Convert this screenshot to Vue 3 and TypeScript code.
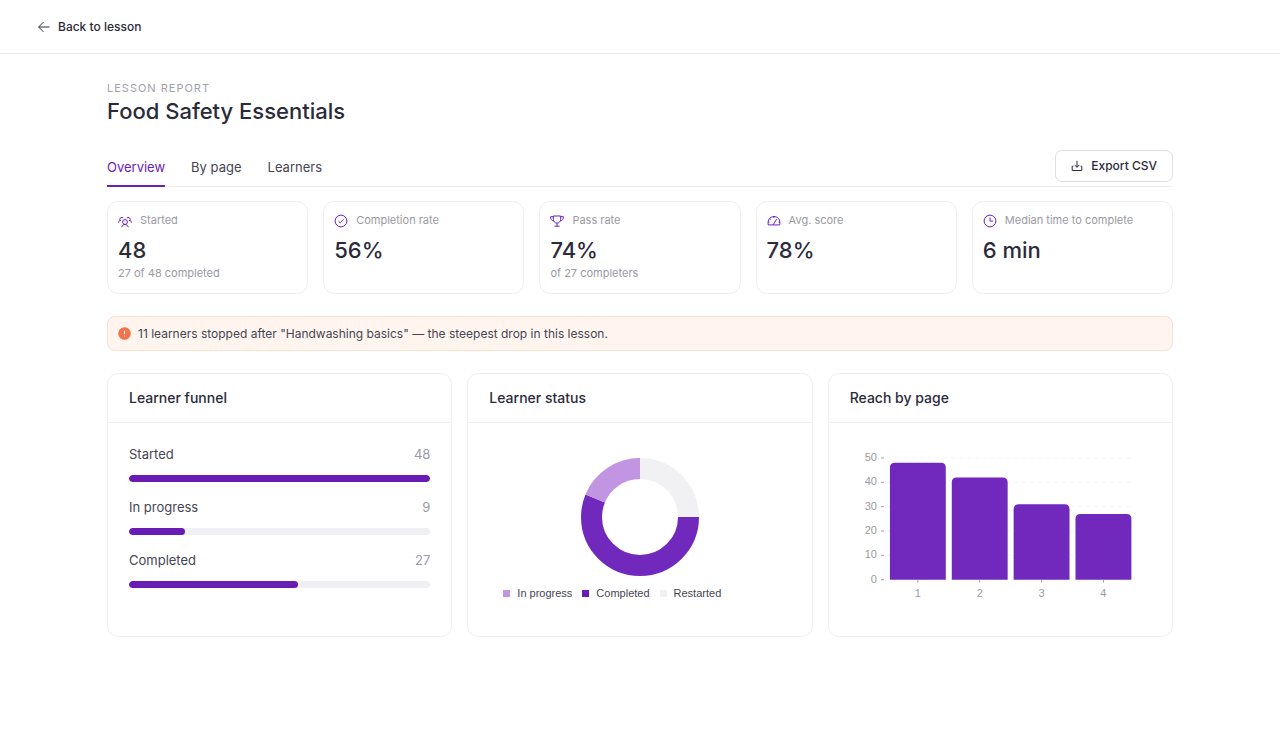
<script setup lang="ts">
import { ref } from 'vue'

type IconName = 'users' | 'check' | 'trophy' | 'gauge' | 'clock'

interface Stat {
  icon: IconName
  label: string
  value: string
  note?: string
}

const tabs: string[] = ['Overview', 'By page', 'Learners']
const activeTab = ref<string>('Overview')

const stats: Stat[] = [
  { icon: 'users', label: 'Started', value: '48', note: '27 of 48 completed' },
  { icon: 'check', label: 'Completion rate', value: '56%' },
  { icon: 'trophy', label: 'Pass rate', value: '74%', note: 'of 27 completers' },
  { icon: 'gauge', label: 'Avg. score', value: '78%' },
  { icon: 'clock', label: 'Median time to complete', value: '6 min' },
]

const funnel = [
  { label: 'Started', count: 48 },
  { label: 'In progress', count: 9 },
  { label: 'Completed', count: 27 },
]
const total = 48

const legend = [
  { label: 'In progress', tone: 'light' },
  { label: 'Completed', tone: 'deep' },
  { label: 'Restarted', tone: 'grey' },
]

// Donut slices are stroked arcs of a circle; pathLength equals the learner total.
const slices = [
  { tone: 'grey', start: 0, size: 12 },
  { tone: 'deep', start: 12, size: 27 },
  { tone: 'light', start: 39, size: 9 },
]

const base = 136
const unit = 122 / 50
const left = 37
const step = 62
const barWidth = 56
const axis = [0, 10, 20, 30, 40, 50]
const reach = [48, 42, 31, 27]

const yOf = (n: number): number => base - n * unit

function barPath(value: number, index: number): string {
  const x = left + index * step + 3
  const y = yOf(value)
  const r = 5
  return `M${x} ${base}V${y + r}q0 ${-r} ${r} ${-r}h${barWidth - 2 * r}q${r} 0 ${r} ${r}V${base}z`
}
</script>

<template>
  <div class="page">
    <header class="topbar">
      <a class="back" href="#">
        <svg class="back-icon" viewBox="0 0 12 12" aria-hidden="true">
          <path d="M11.5 6H.8M5.4 1.2.6 6l4.8 4.8" />
        </svg>
        Back to lesson
      </a>
    </header>

    <main class="content">
      <p class="eyebrow">Lesson report</p>
      <h1>Food Safety Essentials</h1>

      <div class="toolbar">
        <nav class="tabs" aria-label="Report sections">
          <button
            v-for="tab in tabs"
            :key="tab"
            type="button"
            class="tab"
            :class="{ active: tab === activeTab }"
            @click="activeTab = tab"
          >
            {{ tab }}
          </button>
        </nav>
        <button type="button" class="export">
          <svg class="export-icon" viewBox="0 0 12 12" aria-hidden="true">
            <path d="M6 .8v6.4M3.6 4.9 6 7.3l2.4-2.4M2.400 6.200H1.200v4.300h9.600V6.200H9.600" />
          </svg>
          Export CSV
        </button>
      </div>

      <section class="stats" aria-label="Key figures">
        <article v-for="stat in stats" :key="stat.label" class="stat">
          <div class="stat-head">
            <svg class="stat-icon" viewBox="0 0 14 14" aria-hidden="true">
              <g v-if="stat.icon === 'users'">
                <circle cx="7" cy="8" r="2.4" />
                <path d="M3.8 13.2c.2-1.6 1.400-2.700 3.200-2.700s3 1.100 3.200 2.700" />
                <path d="M2.200 6.600A1.900 1.900 0 1 1 5.300 4.200M11.800 6.600A1.900 1.900 0 1 0 8.700 4.200M.5 8.700c.1-1.400.9-2.300 2.600-2.300M13.500 8.700c-.1-1.400-.9-2.300-2.600-2.300" />
              </g>
              <g v-else-if="stat.icon === 'check'">
                <circle cx="7" cy="7" r="5.900" />
                <path d="m4.600 7.300 1.600 1.500 3.200-3.400" />
              </g>
              <g v-else-if="stat.icon === 'trophy'">
                <path d="M3.300 2h7.400v3.200c0 2.300-1.500 3.900-3.700 3.900S3.300 7.500 3.300 5.200z" />
                <path d="M3.300 2.700H.6c0 2.600.9 3.900 3.100 4M10.700 2.700h2.700c0 2.600-.9 3.900-3.100 4M7 9.200V12M4.400 12.200h5.200" />
              </g>
              <g v-else-if="stat.icon === 'gauge'">
                <path d="M1.300 10.900C.3 5.800 2.900 2.500 7 2.500s6.700 3.300 5.700 8.400z" />
                <path d="m6.300 10.700 3.300-5.600M7 2.700v1.400M2.900 4.500l.9.900M1.300 8h1.300M11.500 8h1.300" />
              </g>
              <g v-else>
                <circle cx="7" cy="7" r="5.900" />
                <path d="M7 3.500v3.600h3" />
              </g>
            </svg>
            <span>{{ stat.label }}</span>
          </div>
          <strong class="stat-value">{{ stat.value }}</strong>
          <span v-if="stat.note" class="stat-note">{{ stat.note }}</span>
        </article>
      </section>

      <p class="notice">
        <svg class="notice-icon" viewBox="0 0 13 13" aria-hidden="true">
          <circle cx="6.500" cy="6.500" r="6.300" />
          <path d="M6.500 3.600v3.500M6.500 8.600v.9" />
        </svg>
        <span>11 learners stopped after "Handwashing basics" — the steepest drop in this lesson.</span>
      </p>

      <div class="panels">
        <section class="panel">
          <h2>Learner funnel</h2>
          <div class="panel-body">
            <ul class="funnel">
              <li v-for="row in funnel" :key="row.label">
                <div class="funnel-row">
                  <span>{{ row.label }}</span>
                  <span class="count">{{ row.count }}</span>
                </div>
                <div class="track">
                  <div class="fill" :style="{ width: (row.count / total) * 100 + '%' }"></div>
                </div>
              </li>
            </ul>
          </div>
        </section>

        <section class="panel">
          <h2>Learner status</h2>
          <div class="panel-body">
            <svg class="donut" viewBox="0 0 120 120" role="img" aria-label="Learner status">
              <circle
                v-for="slice in slices"
                :key="slice.tone"
                class="slice"
                :class="slice.tone"
                cx="60"
                cy="60"
                r="48.500"
                pathLength="48"
                :stroke-dasharray="`${slice.size} ${total - slice.size}`"
                :stroke-dashoffset="-slice.start"
                transform="rotate(-90 60 60)"
              />
            </svg>
            <ul class="legend">
              <li v-for="item in legend" :key="item.label">
                <i class="swatch" :class="item.tone"></i>{{ item.label }}
              </li>
            </ul>
          </div>
        </section>

        <section class="panel">
          <h2>Reach by page</h2>
          <div class="panel-body">
            <svg class="bars" viewBox="0 0 302 160" role="img" aria-label="Reach by page">
              <g v-for="n in axis" :key="n">
                <line v-if="n > 0" class="grid" :x1="left" :x2="left + 4 * step" :y1="yOf(n)" :y2="yOf(n)" />
                <line class="tick" x1="31" x2="34" :y1="yOf(n)" :y2="yOf(n)" />
                <text class="axis-text end" x="27" :y="yOf(n) + 3">{{ n }}</text>
              </g>
              <g v-for="(value, i) in reach" :key="i">
                <path class="bar" :d="barPath(value, i)" />
                <line class="tick" :x1="left + (i + 0.5) * step" :x2="left + (i + 0.5) * step" :y1="base" :y2="base + 3" />
                <text class="axis-text mid" :x="left + (i + 0.5) * step" y="153">{{ i + 1 }}</text>
              </g>
            </svg>
          </div>
        </section>
      </div>
    </main>
  </div>
</template>

<style>
body {
  margin: 0;
  background: #fff;
}
</style>

<style scoped>
.page {
  font-family: Inter, 'Open Sans', sans-serif;
  font-size: 13px;
  line-height: 20px;
  color: #2b2b3a;
}

h1,
h2,
p,
ul {
  margin: 0;
  padding: 0;
}

ul {
  list-style: none;
}

button {
  font: inherit;
  background: none;
  cursor: pointer;
}

svg {
  display: block;
  flex: none;
  fill: none;
}

.topbar {
  display: flex;
  align-items: center;
  height: 53px;
  padding: 0 38px;
  border-bottom: 1px solid #f0f0f3;
}

.back {
  display: flex;
  align-items: center;
  gap: 8px;
  font-size: 12px;
  font-weight: 500;
  color: inherit;
  text-decoration: none;
}

.back-icon {
  width: 12px;
  height: 12px;
  stroke: currentColor;
}

.content {
  max-width: 1066px;
  margin: 0 auto;
  padding: 26px 24px;
}

.eyebrow {
  font-size: 11px;
  line-height: 16px;
  letter-spacing: 1px;
  text-transform: uppercase;
  color: #a0a0aa;
}

h1 {
  font-size: 22px;
  line-height: 30px;
  font-weight: 500;
}

.toolbar {
  display: flex;
  justify-content: space-between;
  align-items: flex-start;
  height: 36px;
  margin-top: 24px;
  border-bottom: 1px solid #f0f0f3;
}

.tabs {
  display: flex;
  gap: 26px;
}

.tab {
  height: 37px;
  padding: 0 0 2px;
  border: 0;
  border-bottom: 2px solid transparent;
  color: #454553;
}

.tab.active {
  color: #6b21b5;
  border-color: #6b21b5;
}

.export {
  display: flex;
  align-items: center;
  gap: 8px;
  height: 32px;
  padding: 0 15px;
  border: 1px solid #dedee3;
  border-radius: 7px;
  font-size: 12px;
  font-weight: 500;
  color: #2b2b3a;
}

.export-icon {
  width: 12px;
  height: 12px;
  stroke: currentColor;
}

.stats {
  display: grid;
  grid-template-columns: repeat(5, 1fr);
  gap: 15px;
  margin-top: 14px;
}

.stat {
  display: flex;
  flex-direction: column;
  min-height: 71px;
  padding: 10px;
  border: 1px solid #f0f0f3;
  border-radius: 11px;
}

.stat-head {
  display: flex;
  align-items: flex-end;
  gap: 8px;
  font-size: 11px;
  line-height: 16px;
  color: #9a9aa4;
}

.stat-icon {
  width: 14px;
  height: 14px;
  stroke: #6b21b5;
}

.stat-value {
  font-size: 22px;
  line-height: 28px;
  margin-top: 8px;
  font-weight: 500;
}

.stat-note {
  font-size: 11px;
  line-height: 18px;
  color: #9a9aa4;
}

.notice {
  display: flex;
  align-items: center;
  gap: 7px;
  margin-top: 22px;
  padding: 7px 10px;
  font-size: 12px;
  line-height: 19px;
  background: #fff5ee;
  border: 1px solid #fbdfcf;
  border-radius: 8px;
  color: #454553;
}

.notice-icon {
  width: 13px;
  height: 13px;
  fill: #f5734a;
}

.notice-icon path {
  stroke: #fff;
}

.panels {
  display: grid;
  grid-template-columns: repeat(3, 1fr);
  gap: 15px;
  margin-top: 22px;
}

.panel {
  min-height: 262px;
  border: 1px solid #f0f0f3;
  border-radius: 11px;
}

h2 {
  padding: 14px 21px;
  font-size: 14px;
  line-height: 20px;
  font-weight: 500;
  border-bottom: 1px solid #f0f0f3;
}

.panel-body {
  padding: 21px;
}

.funnel {
  display: grid;
  gap: 15px;
}

.funnel-row {
  display: flex;
  justify-content: space-between;
  margin-bottom: 11px;
  color: #454553;
}

.count {
  color: #9a9aa4;
}

.track {
  height: 7px;
  border-radius: 4px;
  background: #f0f0f2;
  overflow: hidden;
}

.fill {
  height: 100%;
  border-radius: 4px;
  background: #681cb4;
}

.donut {
  width: 120px;
  height: 120px;
  margin: 13px auto 0;
}

.slice {
  stroke-width: 21px;
}

.slice.light {
  stroke: #c195e2;
}

.slice.deep {
  stroke: #7029bc;
}

.slice.grey {
  stroke: #f1f1f4;
}

.legend {
  display: flex;
  gap: 10px;
  margin-top: 8px;
  padding-left: 14px;
  font-family: 'Liberation Sans', sans-serif;
  font-size: 11px;
  line-height: 16px;
  color: #454553;
}

.legend li {
  display: flex;
  align-items: center;
  gap: 7px;
}

.swatch {
  width: 7px;
  height: 7px;
}

.swatch.light {
  background: #c195e2;
}

.swatch.deep {
  background: #681cb4;
}

.swatch.grey {
  background: #f1f1f4;
}

.bars {
  width: 100%;
}

.bar {
  fill: #7029bc;
}

.grid {
  stroke: #f4f4f6;
  stroke-dasharray: 4 4;
}

.tick {
  stroke: #a0a0a8;
}

.axis-text {
  font-family: 'Liberation Sans', sans-serif;
  font-size: 11px;
  fill: #9a9aa2;
}

.end {
  text-anchor: end;
}

.mid {
  text-anchor: middle;
}
</style>
